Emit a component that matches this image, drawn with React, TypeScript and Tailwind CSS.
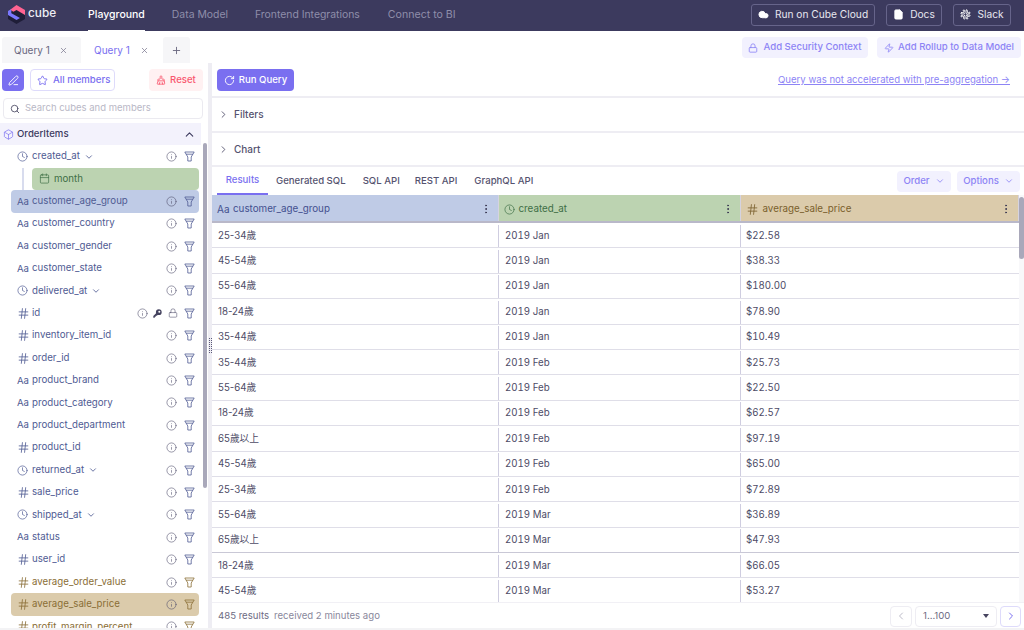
import React from "react";
import { ChevronDown, ChevronRight, ChevronLeft, ChevronUp, Clock, Info, Hash, Calendar, Search, Star, PenLine, RotateCw, Lock, Box, X, Plus, Cloud, FileText, Slack, Zap, MoreVertical, BrushCleaning } from "lucide-react";

type Kind = "str" | "time" | "num";
const members: { n: string; k: Kind; chev?: boolean; sel?: string; extra?: boolean; measure?: boolean }[] = [
  { n: "customer_age_group", k: "str", sel: "bg-[#bfcbe6]" },
  { n: "customer_country", k: "str" },
  { n: "customer_gender", k: "str" },
  { n: "customer_state", k: "str" },
  { n: "delivered_at", k: "time", chev: true },
  { n: "id", k: "num", extra: true },
  { n: "inventory_item_id", k: "num" },
  { n: "order_id", k: "num" },
  { n: "product_brand", k: "str" },
  { n: "product_category", k: "str" },
  { n: "product_department", k: "str" },
  { n: "product_id", k: "num" },
  { n: "returned_at", k: "time", chev: true },
  { n: "sale_price", k: "num" },
  { n: "shipped_at", k: "time", chev: true },
  { n: "status", k: "str" },
  { n: "user_id", k: "num" },
  { n: "average_order_value", k: "num", measure: true },
  { n: "average_sale_price", k: "num", measure: true, sel: "bg-[#dbcbab]" },
  { n: "profit_margin_percent", k: "num", measure: true },
];

const rows = [
  ["25-34歲", "2019 Jan", "$22.58"],
  ["45-54歲", "2019 Jan", "$38.33"],
  ["55-64歲", "2019 Jan", "$180.00"],
  ["18-24歲", "2019 Jan", "$78.90"],
  ["35-44歲", "2019 Jan", "$10.49"],
  ["35-44歲", "2019 Feb", "$25.73"],
  ["55-64歲", "2019 Feb", "$22.50"],
  ["18-24歲", "2019 Feb", "$62.57"],
  ["65歲以上", "2019 Feb", "$97.19"],
  ["45-54歲", "2019 Feb", "$65.00"],
  ["25-34歲", "2019 Feb", "$72.89"],
  ["55-64歲", "2019 Mar", "$36.89"],
  ["65歲以上", "2019 Mar", "$47.93"],
  ["18-24歲", "2019 Mar", "$66.05"],
  ["45-54歲", "2019 Mar", "$53.27"],
];

function Logo() {
  return (
    <svg width="17" height="19" viewBox="0 0 17 19" className="shrink-0">
      <path d="M8.5 4 17 9V14L8.5 19 0 14V9Z" fill="#1f1e38" />
      <path d="M8.5 0 17 5V10L8.5 5 5.5 6.8 2.2 4.8Z" fill="#ff6492" />
      <path d="M0 6 3 4.2 3.4 8.2 12 13 8.5 15 0 10Z" fill="#7a77ff" />
    </svg>
  );
}

function Funnel({ className }: { className: string }) {
  return (
    <svg width="11" height="11" viewBox="0 0 11 11" fill="none" stroke="currentColor" strokeWidth="0.8" strokeLinejoin="round" className={className}>
      <path d="M0.8 1H10.2L7.2 6V10H3.8V6Z" />
      <path d="M2.1 3.2H8.9" />
    </svg>
  );
}

function Key({ className }: { className: string }) {
  return (
    <svg width="9" height="9" viewBox="0 0 9 9" className={className} fill="currentColor">
      <path d="M5.8 0.3A2.9 2.9 0 0 1 5.8 6.1C5.4 6.1 5 6 4.7 5.9L3.8 6.8H2.8V7.8H1.8V8.7H0.3V7.1L3.1 4.3C3 4 2.9 3.6 2.9 3.2A2.9 2.9 0 0 1 5.8 0.3ZM6.3 1.7A1 1 0 1 0 6.3 3.7 1 1 0 0 0 6.3 1.7Z" fillRule="evenodd" />
    </svg>
  );
}

function KindIcon({ k, color }: { k: Kind; color: string }) {
  if (k === "time") return <Clock size={11} strokeWidth={1.5} className={color} />;
  if (k === "num") return <Hash size={13} strokeWidth={1.5} className={color} />;
  return <span className={`text-[9.6px] leading-none ${color}`}>Aa</span>;
}

function Member({ m }: { m: (typeof members)[number] }) {
  const color = m.measure ? "text-[#8a6e36]" : "text-[#4f5b93]";
  return (
    <div className={`h-[22.4px] shrink-0 ml-[11px] mr-[9px] pl-[6px] pr-[4px] flex items-center rounded-[4px] ${m.sel ?? ""}`}>
      <span className="w-[15px] flex items-center justify-start shrink-0"><KindIcon k={m.k} color={color} /></span>
      <span className={`text-[9.7px] whitespace-nowrap ${color}`}>{m.n}</span>
      {m.chev && <ChevronDown size={10} className={`ml-[4px] ${color}`} />}
      <span className="flex-1" />
      {m.extra && (
        <>
          <Info size={11} strokeWidth={1.3} className="text-[#55536f] mr-[5.5px]" />
          <Key className="text-[#45435f] mr-[6px]" />
          <Lock size={10} strokeWidth={1.4} className="text-[#55536f] mr-[6px]" />
        </>
      )}
      {!m.extra && <Info size={11} strokeWidth={1.3} className="text-[#55536f] mr-[7px]" />}
      <Funnel className={color} />
    </div>
  );
}

function TopBtn({ icon, label, w }: { icon: React.ReactNode; label: string; w: string }) {
  return (
    <div className={`${w} h-[22px] flex items-center justify-center gap-[6px] border border-[#66648a] rounded-[3px] text-[10.2px] text-[#e8e7f0]`}>
      {icon}
      {label}
    </div>
  );
}

function Head({ icon, label, cls, w, tcolor }: { icon: React.ReactNode; label: string; cls: string; w: string; tcolor: string }) {
  return (
    <div className={`${w} ${cls} h-full flex items-center pl-[5px] pr-[6px] pt-[2px] gap-[3.5px] border-r border-[#d5d3e0] shrink-0`}>
      {icon}
      <span className={`text-[9.8px] ${tcolor}`}>{label}</span>
      <span className="flex-1" />
      <MoreVertical size={12} strokeWidth={2} className="text-[#3a3852]" />
    </div>
  );
}

export default function App() {
  return (
    <div className="w-[1024px] h-[630px] overflow-hidden bg-white flex flex-col font-['Inter',sans-serif] text-[#46445f]">
      {/* header */}
      <div className="h-[31px] bg-[#3c3a5e] flex items-stretch shrink-0">
        <div className="w-[88px] pl-[8px] pb-[3px] flex items-center gap-[3px]">
          <Logo />
          <span className="text-[11.8px] font-medium text-[#eeeef5]">cube</span>
        </div>
        <div className="pb-[2px] flex items-center relative text-[10.5px] font-medium text-white">
          Playground
          <span className="absolute left-0 right-0 bottom-0 h-[1px] bg-white" />
        </div>
        <div className="ml-[27px] pb-[2px] flex items-center text-[10.4px] text-[#8f8eaa]">Data Model</div>
        <div className="ml-[27px] pb-[2px] flex items-center text-[10.4px] text-[#8f8eaa]">Frontend Integrations</div>
        <div className="ml-[28px] pb-[2px] flex items-center text-[10.6px] text-[#8f8eaa]">Connect to BI</div>
        <div className="flex-1" />
        <div className="flex items-center gap-[11px] pr-[13px] pb-[2px]">
          <TopBtn w="w-[124px]" icon={<Cloud size={11} fill="white" className="text-white" />} label="Run on Cube Cloud" />
          <TopBtn w="w-[56px]" icon={<FileText size={11} fill="white" className="text-white" />} label="Docs" />
          <TopBtn w="w-[58px]" icon={<Slack size={11} className="text-white" />} label="Slack" />
        </div>
      </div>

      {/* tabs */}
      <div className="h-[32px] flex items-end shrink-0 pl-[2px] bg-white relative">
        <div className="w-[79px] h-[26px] bg-[#f6f6f8] rounded-t-[3px] flex items-center pl-[12px] text-[10px] text-[#6a6880]">
          Query 1<X size={9} className="ml-[9px] text-[#7d7b92]" />
        </div>
        <div className="w-[79px] h-[26px] ml-[2px] flex items-center pl-[11px] text-[10px] text-[#7a6ff0] rounded-t-[3px]">
          Query 1<X size={9} className="ml-[10px] text-[#7d7b92]" />
        </div>
        <div className="w-[27px] h-[26px] ml-[1px] bg-[#f6f6f8] rounded-t-[3px] flex items-center justify-center">
          <Plus size={11} className="text-[#6a6880]" />
        </div>
        <div className="flex-1" />
        <div className="flex gap-[9px] pr-[3px] self-start mt-[6px]">
          <div className="w-[126px] h-[21px] justify-center bg-[#f2f1fe] rounded-[4px] flex items-center gap-[5px] text-[9.6px] font-medium text-[#8d84f5]">
            <Lock size={10} />Add Security Context
          </div>
          <div className="w-[144px] h-[21px] justify-center bg-[#f2f1fe] rounded-[4px] flex items-center gap-[4px] text-[9.6px] font-medium text-[#8d84f5]">
            <Zap size={10} />Add Rollup to Data Model
          </div>
        </div>
      </div>

      <div className="flex-1 flex min-h-0 border-b-2 border-[#f3f3f5]">
        {/* sidebar */}
        <div className="w-[208px] shrink-0 flex flex-col relative overflow-hidden">
          <div className="h-[33px] shrink-0 flex items-center pl-[2px] pr-[5px] pt-[1px]">
            <div className="w-[22px] h-[22px] bg-[#7a6ff0] rounded-[4px] flex items-center justify-center">
              <PenLine size={11} className="text-white" />
            </div>
            <div className="w-[85px] h-[22px] ml-[6px] border border-[#dedbfb] rounded-[4px] flex items-center pl-[6px] gap-[5px] text-[9.6px] font-medium text-[#7a6ff0]">
              <Star size={11} />All members
            </div>
            <div className="w-[54px] h-[22px] ml-auto bg-[#fff1f2] rounded-[4px] flex items-center justify-center gap-[4px] text-[9.6px] font-medium text-[#f9576f]">
              <BrushCleaning size={10} />Reset
            </div>
          </div>
          <div className="h-[21px] shrink-0 mx-[3px] mr-[5px] mt-[2px] border border-[#ebeaf0] rounded-[4px] flex items-center pl-[6px] gap-[5px] text-[9.5px] text-[#b9b8c6]">
            <Search size={10} className="text-[#46445f]" />Search cubes and members
          </div>
          <div className="h-[22px] shrink-0 mt-[4px] mr-[7px] bg-[#f3f2fc] flex items-center pl-[3px] pr-[5px]">
            <Box size={11} className="text-[#7a6ff0]" strokeWidth={1.5} />
            <span className="ml-[3px] text-[9.6px] font-medium text-[#3c3a5e]">OrderItems</span>
            <ChevronUp size={13} className="ml-auto text-[#3c3a5e]" />
          </div>
          <div className="flex-1 min-h-0 pt-[0.4px] overflow-hidden flex flex-col">
            <Member m={{ n: "created_at", k: "time", chev: true }} />
            <div className="h-[22.4px] shrink-0 ml-[22px] flex items-center">
              <span className="w-[2px] h-full bg-[#d8dcee]" />
              <div className="ml-[8px] mr-[9px] flex-1 h-full bg-[#bcd3b1] rounded-[4px] flex items-center pl-[7px] gap-[4px] text-[9.7px] text-[#3f6f46]">
                <Calendar size={11} strokeWidth={1.5} />month
              </div>
            </div>
            {members.map((m) => <Member key={m.n} m={m} />)}
          </div>
          <div className="absolute right-[1px] top-[80px] w-[4px] h-[345px] rounded bg-[#a9a8ba]" />
        </div>

        {/* divider */}
        <div className="w-[4px] shrink-0 relative bg-[#eeedf3]">
          <div className="absolute left-[0.5px] top-[275px] w-[3px] h-[15px] border-x border-dotted border-[#5a5878]" />
        </div>

        {/* main */}
        <div className="flex-1 min-w-0 flex flex-col">
          <div className="h-[35px] shrink-0 flex items-center border-b-2 border-[#eeedf3] pl-[5px] pr-[14px] pt-[1px]">
            <div className="w-[77px] h-[22px] bg-[#7a6ff0] rounded-[4px] flex items-center justify-center gap-[4px] text-[9.6px] font-medium text-white">
              <RotateCw size={11} />Run Query
            </div>
            <a className="ml-auto text-[9.6px] text-[#8d84f5] underline">Query was not accelerated with pre-aggregation →</a>
          </div>
          <div className="h-[35px] shrink-0 flex items-center border-b-2 border-[#eeedf3] pl-[6px] gap-[5px] text-[10px] font-medium text-[#55536f]">
            <ChevronRight size={11} />Filters
          </div>
          <div className="h-[34px] shrink-0 flex items-center border-b-2 border-[#eeedf3] pl-[6px] gap-[5px] text-[10px] font-medium text-[#55536f]">
            <ChevronRight size={11} />Chart
          </div>
          <div className="h-[28px] shrink-0 flex items-stretch pl-[5px] pr-[4px] text-[9.6px] font-medium text-[#55536f]">
            <div className="w-[51px] pt-[1px] flex items-center justify-center border-b-2 border-[#7a6ff0] text-[#7a6ff0]">Results</div>
            <div className="ml-[8px] pt-[1px] flex items-center">Generated SQL</div>
            <div className="ml-[17px] pt-[1px] flex items-center">SQL API</div>
            <div className="ml-[15px] pt-[1px] flex items-center">REST API</div>
            <div className="ml-[17px] pt-[1px] flex items-center">GraphQL API</div>
            <div className="flex-1" />
            <div className="self-center w-[54px] h-[21px] bg-[#f2f1fe] rounded-[4px] flex items-center justify-center gap-[5px] text-[#8d84f5]">
              Order<ChevronDown size={10} />
            </div>
            <div className="self-center ml-[6px] w-[63px] h-[21px] bg-[#f2f1fe] rounded-[4px] flex items-center justify-center gap-[5px] text-[#8d84f5]">
              Options<ChevronDown size={10} />
            </div>
          </div>

          <div className="flex-1 min-h-0 overflow-hidden relative flex flex-col">
            <div className="h-[28px] shrink-0 flex border-b-2 border-[#b9b8c9] w-[807px]">
              <Head w="w-[287px]" cls="bg-[#bfcbe6]" tcolor="text-[#43508f]" label="customer_age_group" icon={<span className="text-[10px] text-[#43508f]">Aa</span>} />
              <Head w="w-[242px]" cls="bg-[#bcd3b1]" tcolor="text-[#3f6f46]" label="created_at" icon={<Clock size={11} strokeWidth={1.5} className="text-[#3f6f46]" />} />
              <Head w="w-[278px]" cls="bg-[#dbcbab]" tcolor="text-[#7a5f2c]" label="average_sale_price" icon={<Hash size={13} strokeWidth={1.5} className="text-[#7a5f2c]" />} />
            </div>
            {rows.map((r, i) => (
              <div key={i} className={`h-[25.4px] pt-[1.5px] shrink-0 flex border-b w-[807px] text-[9.7px] tabular-nums text-[#4d4b66] ${i === 12 ? "border-[#c9c8d6]" : "border-[#dfdee8]"}`}>
                <div className="w-[287px] pl-[6px] flex items-center border-r border-[#cfcde0] normal-nums font-['Inter','Noto_Sans_CJK_TC',sans-serif]">{r[0]}</div>
                <div className="w-[242px] pl-[6px] flex items-center border-r border-[#cfcde0]">{r[1]}</div>
                <div className="pl-[5px] flex items-center">{r[2]}</div>
              </div>
            ))}
            <div className="absolute right-0 top-0 bottom-0 w-[5px] bg-[#f8f8fa]" />
            <div className="absolute right-0 top-[2px] w-[5px] h-[62px] rounded bg-[#a9a8ba]" />
          </div>

          <div className="h-[26px] shrink-0 border-t border-[#f1f0f5] flex items-center pl-[6px] pr-[3px] pt-[1px] text-[9.6px] bg-white relative">
            <span className="text-[#6d6b82]">485 results</span>
            <span className="ml-[5px] text-[#8a889c]">received 2 minutes ago</span>
            <div className="flex-1" />
            <div className="w-[22px] h-[21px] border border-[#eeedf3] rounded-[4px] flex items-center justify-center">
              <ChevronLeft size={12} className="text-[#bdbcc9]" />
            </div>
            <div className="w-[82px] h-[21px] ml-[3px] border border-[#eeedf3] rounded-[4px] flex items-center pl-[7px] pr-[7px] text-[#6d6b82]">
              1...100
              <span className="ml-auto w-0 h-0 border-x-[3.5px] border-x-transparent border-t-[4px] border-t-[#46445f]" />
            </div>
            <div className="w-[21px] h-[21px] ml-[3px] border border-[#dedbfb] rounded-[4px] flex items-center justify-center">
              <ChevronRight size={12} className="text-[#7a6ff0]" />
            </div>
          </div>
        </div>
      </div>
    </div>
  );
}
